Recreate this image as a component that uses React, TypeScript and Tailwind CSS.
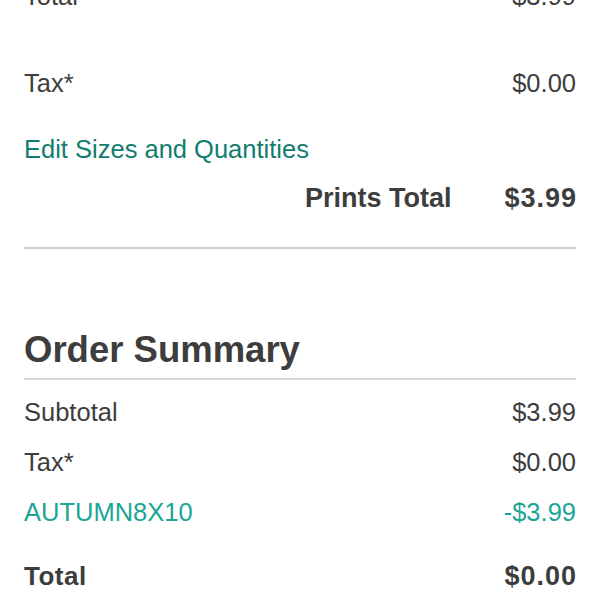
import React from "react";

const Row = ({ left, right, className = "" }: { left: React.ReactNode; right: React.ReactNode; className?: string }) => (
  <div className={`flex h-[40px] items-center justify-between ${className}`}>
    <span>{left}</span>
    <span>{right}</span>
  </div>
);

export default function App() {
  return (
    <div className="h-[600px] w-[600px] overflow-hidden bg-white">
      <div
        className="flex flex-col px-6 text-[25.5px] text-[#3d3d3d]"
        style={{ fontFamily: '"Liberation Sans", Arial, sans-serif' }}
      >
        <Row className="-mt-[24px]" left="Total" right="$3.99" />
        <Row className="mt-[47px]" left="Tax*" right="$0.00" />
        <div className="mt-[26px] flex h-[40px] items-center text-[#117d6e]">Edit Sizes and Quantities</div>
        <div className="mt-[9px] flex h-[40px] items-center justify-end text-[27px] font-bold">
          <span>Prints Total</span>
          <span className="ml-[53px] tracking-[1px] -mr-[1px]">$3.99</span>
        </div>
        <div className="mt-[29px] h-[2px] bg-[#cfcfcf]" />
        <div className="mt-[76px] flex h-[50px] items-center text-[36.5px] font-bold">Order Summary</div>
        <div className="mt-[3px] h-[2px] bg-[#d6d6d6]" />
        <Row className="mt-[12px]" left="Subtotal" right="$3.99" />
        <Row className="mt-[10px]" left="Tax*" right="$0.00" />
        <Row className="mt-[10px] text-[#1ba595]" left="AUTUMN8X10" right="-$3.99" />
        <div className="mt-[24px] flex h-[40px] items-center justify-between text-[26px] font-bold">
          <span className="tracking-[0.5px]">Total</span>
          <span className="text-[27px] tracking-[1px] -mr-[1px]">$0.00</span>
        </div>
      </div>
    </div>
  );
}
